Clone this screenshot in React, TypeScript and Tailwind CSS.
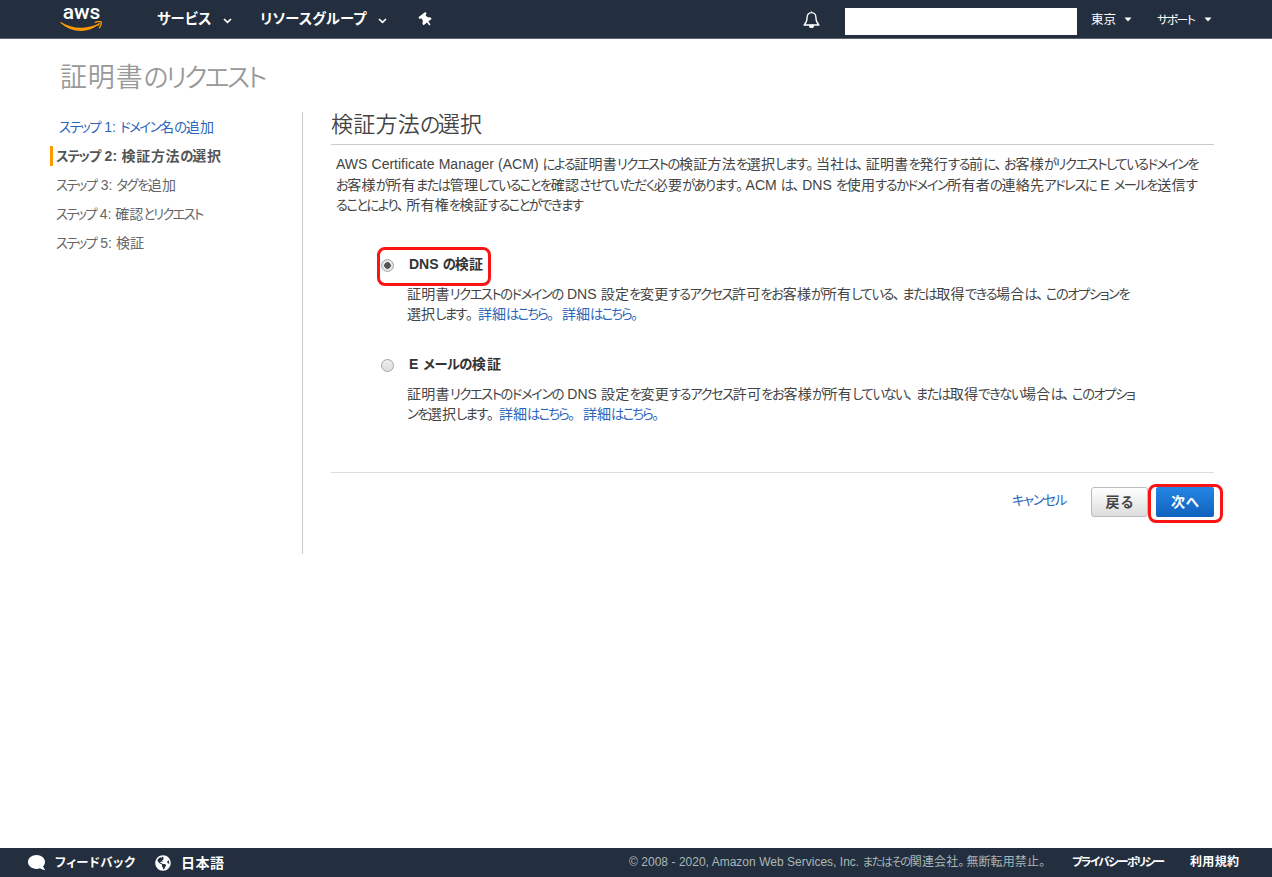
import { useState } from "react";
import { FaComment, FaGlobeAmericas, FaThumbtack } from "react-icons/fa";
import clsx from "clsx";

const RUNS = /([\u3041-\u30ff]+|[、。])/;

// Sets kana tighter than kanji, the way a UI-width Japanese face does
function Ja({ children, tight }: { children: string; tight?: boolean }) {
  return (
    <>
      {children.split(RUNS).map((part, i) => {
        if (i % 2 === 0) return part;
        return /[、。]/.test(part) ? (
          <span key={i} className="leading-none tracking-[0.16em]">
            {part}
          </span>
        ) : (
          <span key={i} className={clsx("text-[0.95em] leading-none", tight ? "tracking-[-0.17em]" : "tracking-[-0.13em]")}>
            {part}
          </span>
        );
      })}
    </>
  );
}

// One line of text, spread over the width that its class gives
function Line({ children, className, tight }: { children: string; className: string; tight?: boolean }) {
  return (
    <span className={clsx("block shrink-0 whitespace-nowrap [text-align-last:justify]", className)}>
      <Ja tight={tight}>{children}</Ja>
    </span>
  );
}

const steps = [
  { text: "ステップ 1: ドメイン名の追加", style: "ml-[9px] w-[155px] text-[#2a65ba]" },
  { text: "ステップ 2: 検証方法の選択", style: "ml-[3px] w-[165px] font-bold text-[#555]" },
  { text: "ステップ 3: タグを追加", style: "ml-[6px] w-[120px] text-[#666]" },
  { text: "ステップ 4: 確認とリクエスト", style: "ml-[6px] w-[145px] text-[#666]" },
  { text: "ステップ 5: 検証", style: "ml-[6px] w-[88px] text-[#666]" },
];

const options = [
  {
    id: "dns",
    label: "DNS の検証",
    labelStyle: "w-[74px]",
    first: "証明書リクエストのドメインの DNS 設定を変更するアクセス許可をお客様が所有している、または取得できる場合は、このオプションを",
    firstStyle: "w-[722px]",
    rest: "選択します。",
    restStyle: "w-[68px]",
  },
  {
    id: "email",
    label: "E メールの検証",
    labelStyle: "w-[92px]",
    first: "証明書リクエストのドメインの DNS 設定を変更するアクセス許可をお客様が所有していない、または取得できない場合は、このオプショ",
    firstStyle: "w-[727px]",
    rest: "ンを選択します。",
    restStyle: "w-[89px]",
  },
];

function Chevron() {
  return (
    <svg width="9" height="6" viewBox="0 0 9 6" fill="none" stroke="currentColor" strokeWidth="1.7">
      <path d="M1 1l3.5 3.3L8 1" />
    </svg>
  );
}

function Caret() {
  return (
    <svg width="8" height="5" viewBox="0 0 8 5" fill="currentColor">
      <path d="M0.5 0.5h7L4 4.6z" />
    </svg>
  );
}

function Logo() {
  return (
    <a href="#" className="flex h-[38px] w-[43px] flex-col items-center">
      <span className="h-[21px] font-['Roboto'] text-[21px] leading-[25px] font-medium">aws</span>
      <svg width="43" height="11" viewBox="0 0 43 11" className="text-[#f90]">
        <path d="M.8 1C7 4.800 14 6.800 21 6.800c5.600 0 11-1.200 15.800-3.200.8-.3 1.300.5.6 1C33 8 27 9.900 21.200 9.900 13.500 9.900 6.300 7 .6 1.900.1 1.400.4.8.8 1z" fill="currentColor" />
        <path d="M35.200 1.500c2.200-1 5-1.200 5.900-.6.500 1-.3 4.200-1.700 5.900" fill="none" stroke="currentColor" strokeWidth="1.300" strokeLinecap="round" strokeLinejoin="round" />
        <path d="M36 3.900L40.500 1.300l-1.900 3.500z" fill="currentColor" />
      </svg>
    </a>
  );
}

function Bell() {
  return (
    <svg width="17" height="18" viewBox="0 0 17 18" fill="none" stroke="currentColor" strokeWidth="1.300" strokeLinejoin="round">
      <path d="M8.500 1.700c-2.900 0-4.400 2-4.400 4.700 0 3.800-1 5.600-3 7.600h14.800c-2-2-3-3.800-3-7.600 0-2.700-1.500-4.700-4.400-4.700z" />
      <path d="M6.600 14.500a1.900 1.900 0 003.800 0z" fill="currentColor" />
      <path d="M8.500.5v1.200" />
    </svg>
  );
}

function Header() {
  return (
    <header className="flex h-[39px] shrink-0 items-center border-b border-[#5c6470] bg-[#232f3e] pl-[60px] text-white">
      <Logo />
      <a href="#" className="ml-[54px] flex items-center">
        <Line tight className="w-[52px] text-[15px] leading-[38px] font-bold">サービス</Line>
        <span className="ml-[14px] pt-[3px]"><Chevron /></span>
      </a>
      <a href="#" className="ml-[28px] flex items-center">
        <Line tight className="w-[104px] text-[15px] leading-[38px] font-bold">リソースグループ</Line>
        <span className="ml-[14px] pt-[3px]"><Chevron /></span>
      </a>
      <FaThumbtack className="mt-[2px] ml-[32px] -rotate-[38deg] text-[14px]" />
      <span className="mt-px ml-auto"><Bell /></span>
      <div className="mt-[4px] ml-[25px] h-[27px] w-[232px] bg-white" />
      <a href="#" className="ml-[14px] flex items-center">
        <Line className="w-[25px] pt-px text-[12.5px] leading-[38px]">東京</Line>
        <span className="ml-[8px] pt-px"><Caret /></span>
      </a>
      <a href="#" className="mr-[60px] ml-[25px] flex items-center">
        <Line tight className="w-[37px] pt-px text-[12.5px] leading-[38px]">サポート</Line>
        <span className="ml-[10px] pt-px"><Caret /></span>
      </a>
    </header>
  );
}

function Footer() {
  return (
    <footer className="flex h-[29px] shrink-0 items-center bg-[#232f3e] pl-[28px] text-[13px] leading-[28px] text-white">
      <FaComment className="-scale-x-100 text-[17px]" />
      <Line tight className="ml-[10px] w-[78px] font-bold">フィードバック</Line>
      <FaGlobeAmericas className="ml-[22px] text-[16px]" />
      <Line className="ml-[10px] w-[43px] text-[14px] leading-[26px] font-bold">日本語</Line>
      <Line className="ml-auto w-[418px] text-[12px] leading-[27px] text-[#aab7b8]">
        © 2008 - 2020, Amazon Web Services, Inc. またはその関連会社。無断転用禁止。
      </Line>
      <Line tight className="ml-[25px] w-[91px] text-[12px] leading-[27px] font-bold">プライバシーポリシー</Line>
      <Line className="mr-[33px] ml-[27px] w-[49px] text-[12px] leading-[27px] font-bold">利用規約</Line>
    </footer>
  );
}

export default function App() {
  const [method, setMethod] = useState("dns");

  return (
    <div className="flex h-[877px] w-[1272px] flex-col overflow-hidden bg-white font-['Liberation_Sans','Noto_Sans_CJK_JP',sans-serif] text-[14px] text-[#444] [font-feature-settings:'palt']">
      <Header />

      <main className="flex-1">
        <h1 className="flex h-[73px] pt-[3px] pl-[60px] text-[#999]">
          <Line className="w-[204px] text-[27px] leading-[73px] font-[350]">証明書のリクエスト</Line>
        </h1>

        <div className="flex">
          <nav className="h-[442px] w-[303px] border-r border-[#ccc] pl-[50px]">
            {steps.map((step, i) => (
              <div
                key={step.text}
                className={clsx("flex h-[29px] items-center", i === 1 && "before:h-[20px] before:w-[3px] before:bg-[#f90]")}
              >
                <Line className={clsx("pt-px leading-[29px]", step.style)}>{step.text}</Line>
              </div>
            ))}
          </nav>

          <section className="ml-[28px] w-[883px]">
            <h2 className="flex h-[33px] border-b border-[#ccc]">
              <Line className="w-[151px] text-[22px] leading-[26px] font-[350]">検証方法の選択</Line>
            </h2>

            <div className="h-[102px] pt-[9px] pl-[5px] leading-[20.5px]">
              <Line className="w-[862px]">AWS Certificate Manager (ACM) による証明書リクエストの検証方法を選択します。当社は、証明書を発行する前に、お客様がリクエストしているドメインを</Line>
              <Line className="w-[860px]">お客様が所有または管理していることを確認させていただく必要があります。ACM は、DNS を使用するかドメイン所有者の連絡先アドレスに E メールを送信す</Line>
              <Line className="w-[246px]">ることにより、所有権を検証することができます</Line>
            </div>

            <div className="h-[226px] border-b border-[#ddd] pl-[46px]">
              {options.map((option) => (
                <div key={option.id} className="h-[100px]">
                  <label className="relative flex h-[37px] items-center pl-[4px]">
                    {option.id === "dns" && (
                      <span className="absolute top-0 left-0 h-[39px] w-[114px] rounded-[8px] border-[3px] border-[#fb1414]" />
                    )}
                    <input
                      type="radio"
                      name="method"
                      checked={method === option.id}
                      onChange={() => setMethod(option.id)}
                      className="mb-px size-[13px] appearance-none rounded-full border border-[#a5a5a5] bg-linear-to-b from-[#eee] to-[#ddd] checked:bg-[radial-gradient(circle,#555_0_3px,#e6e6e6_3.500px)]"
                    />
                    <Line className={clsx("mb-[2px] ml-[15px] font-bold text-[#333]", option.labelStyle)}>{option.label}</Line>
                  </label>
                  <div className="pl-[30px] leading-[20px]">
                    <Line className={option.firstStyle}>{option.first}</Line>
                    <div className="flex">
                      <Line className={option.restStyle}>{option.rest}</Line>
                      <a href="#" className="ml-[3px] text-[#2a65ba]"><Line className="w-[78px]">詳細はこちら。</Line></a>
                      <a href="#" className="ml-[6px] text-[#2a65ba]"><Line className="w-[78px]">詳細はこちら。</Line></a>
                    </div>
                  </div>
                </div>
              ))}
            </div>

            <div className="flex items-center justify-end pt-[14px]">
              <a href="#" className="mr-[26px] text-[#2a65ba]">
                <Line tight className="w-[53px] pb-[4px] leading-[26px]">キャンセル</Line>
              </a>
              <button className="flex h-[30px] w-[57px] items-center justify-center rounded-[3px] border border-[#bbb] bg-linear-to-b from-white to-[#ddd] font-bold text-[#444]">
                <Line className="mr-[2px] w-[26px]">戻る</Line>
              </button>
              <button className="relative ml-[8px] flex h-[30px] w-[58px] items-center justify-center rounded-[2px] bg-linear-to-b from-[#2586e4] to-[#0f62bd] font-bold text-white">
                <Line className="mr-[2px] w-[26px]">次へ</Line>
                <span className="absolute -top-[3px] -left-[8px] h-[39px] w-[75px] rounded-[8px] border-[3px] border-[#fb1414]" />
              </button>
            </div>
          </section>
        </div>
      </main>

      <Footer />
    </div>
  );
}
